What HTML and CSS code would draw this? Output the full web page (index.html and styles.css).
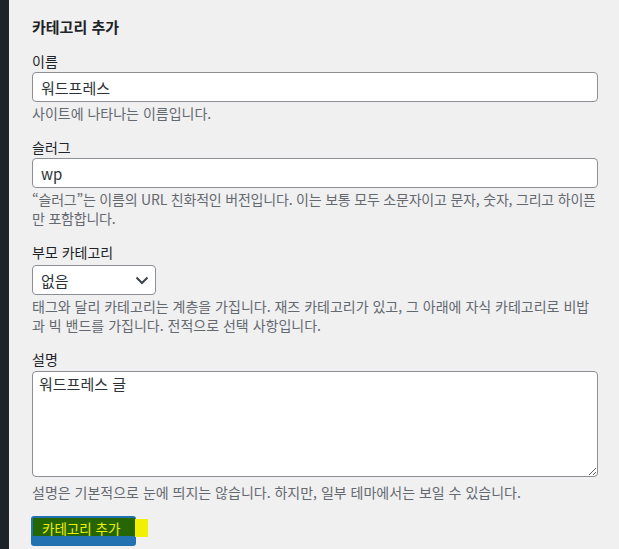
FILE: index.html
```html
<!DOCTYPE html>
<html lang="ko">
<head>
<meta charset="utf-8">
<title>카테고리 추가</title>
<link rel="stylesheet" href="styles.css">
</head>
<body>
<div class="layout">
  <div class="sidebar"></div>
  <main class="content">
    <h2 class="title">카테고리 추가</h2>

    <div class="field">
      <label class="label" for="tag-name">이름</label>
      <input class="text-input" id="tag-name" type="text" value="워드프레스">
      <p class="desc">사이트에 나타나는 이름입니다.</p>
    </div>

    <div class="field">
      <label class="label" for="tag-slug">슬러그</label>
      <input class="text-input" id="tag-slug" type="text" value="wp">
      <p class="desc desc-tight">“슬러그”는 이름의 URL 친화적인 버전입니다. 이는 보통 모두 소문자이고 문자, 숫자, 그리고 하이픈만 포함합니다.</p>
    </div>

    <div class="field">
      <label class="label" for="parent">부모 카테고리</label>
      <div class="select-wrap">
        <select class="select" id="parent">
          <option>없음</option>
        </select>
        <svg class="select-arrow" width="14" height="9" viewBox="0 0 14 9" aria-hidden="true">
          <path d="M1.5 1.5 L7 7 L12.5 1.5" fill="none" stroke="#3c434a" stroke-width="2"/>
        </svg>
      </div>
      <p class="desc">태그와 달리 카테고리는 계층을 가집니다. 재즈 카테고리가 있고, 그 아래에 자식 카테고리로 비밥과 빅 밴드를 가집니다. 전적으로 선택 사항입니다.</p>
    </div>

    <div class="field">
      <label class="label" for="tag-description">설명</label>
      <textarea class="textarea" id="tag-description">워드프레스 글</textarea>
      <p class="desc desc-after-area">설명은 기본적으로 눈에 띄지는 않습니다. 하지만, 일부 테마에서는 보일 수 있습니다.</p>
    </div>

    <button class="submit" type="button"><span class="submit-hl">카테고리 추가</span><span class="submit-tail"></span></button>
  </main>
</div>
</body>
</html>
```
FILE: styles.css
```css
html, body {
  margin: 0;
  height: 100%;
}

body {
  background: #f0f0f1;
  color: #1d2327;
  font-family: "Noto Sans CJK KR", "Noto Sans", sans-serif;
  font-size: 14px;
  overflow: hidden;
}

.layout {
  display: flex;
  min-height: 100vh;
}

.sidebar {
  width: 9px;
  flex-shrink: 0;
  background: #1d2327;
}

.content {
  flex: 1;
  min-width: 0;
  padding: 16px 21px 0 23px;
}

.title {
  margin: 0;
  font-size: 15px;
  line-height: 21px;
  font-weight: 700;
  color: #1d2327;
}

.field {
  margin-top: 15px;
}

.label {
  display: block;
  line-height: 18px;
  color: #1d2327;
}

.text-input {
  display: block;
  box-sizing: border-box;
  width: 100%;
  height: 30px;
  margin: 2px 0 0;
  padding: 0 8px;
  border: 1px solid #8c8f94;
  border-radius: 4px;
  background: #fff;
  color: #2c3338;
  font-family: "Noto Sans CJK KR", "Noto Sans", sans-serif;
  font-size: 15px;
  line-height: 28px;
  outline: none;
}

.desc {
  margin: 2px 0 0;
  color: #646970;
  line-height: 19px;
}

.desc-tight {
  letter-spacing: -0.2px;
}

.desc-after-area {
  margin-top: 6px;
}

.select-wrap {
  position: relative;
  width: 124px;
  margin-top: 4px;
}

.select {
  display: block;
  box-sizing: border-box;
  width: 124px;
  height: 30px;
  margin: 0;
  padding: 0 24px 0 8px;
  border: 1px solid #8c8f94;
  border-radius: 4px;
  background: #fff;
  color: #2c3338;
  font-family: "Noto Sans CJK KR", "Noto Sans", sans-serif;
  font-size: 15px;
  -webkit-appearance: none;
  appearance: none;
  outline: none;
}

.select-arrow {
  position: absolute;
  right: 7px;
  top: 11px;
  pointer-events: none;
}

.textarea {
  display: block;
  box-sizing: border-box;
  width: 100%;
  height: 106px;
  margin: 3px 0 0;
  padding: 2px 6px;
  border: 1px solid #8c8f94;
  border-radius: 4px;
  background: #fff;
  color: #2c3338;
  font-family: "Noto Sans CJK KR", "Noto Sans", sans-serif;
  font-size: 15px;
  line-height: 20px;
  outline: none;
}

.submit {
  display: flex;
  align-items: flex-start;
  box-sizing: border-box;
  width: 105px;
  height: 30px;
  margin: 14px 0 0 -1px;
  padding: 2px 0 0 2px;
  border: 0;
  border-radius: 3px;
  background: #2271b1;
  overflow: visible;
  cursor: pointer;
}

.submit-hl {
  flex-shrink: 0;
  box-sizing: border-box;
  width: 102px;
  height: 18px;
  padding-left: 9px;
  background: #266600;
  color: #f0f000;
  font-family: "Noto Sans CJK KR", "Noto Sans", sans-serif;
  font-size: 13.5px;
  line-height: 21px;
  text-align: left;
  white-space: nowrap;
}

.submit-tail {
  flex-shrink: 0;
  width: 13px;
  height: 18px;
  margin-top: 1px;
  background: #f0f000;
}
```
